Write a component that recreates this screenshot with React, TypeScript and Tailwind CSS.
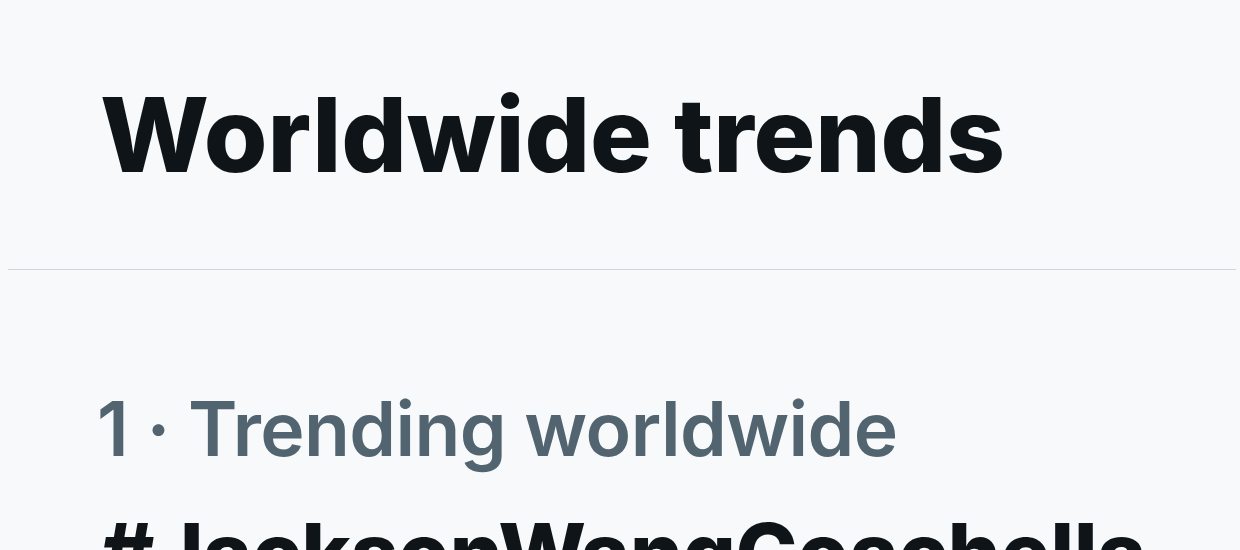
export default function App() {
  return (
    <div className="w-[1240px] h-[550px] overflow-hidden bg-[#f7f9fa]" style={{ fontFamily: 'Inter, "Liberation Sans", sans-serif' }}>
      <div className="h-[270px] pl-[92px] pt-[83px] ml-[8px] mr-[4px] border-b border-[#cfd6da]">
        <h1 className="text-[103px] leading-none font-extrabold tracking-[-0.15px] text-[#0f1419]">Worldwide trends</h1>
      </div>
      <div className="pl-[97px] pt-[121px]">
        <div className="text-[75px] leading-none font-semibold tracking-[-0.6px] text-[#536471]">1 · Trending worldwide</div>
        <div className="mt-[46px] pl-[3px] text-[83px] leading-none font-extrabold text-[#0f1419] whitespace-nowrap">#JacksonWangCoachella</div>
      </div>
    </div>
  );
}
